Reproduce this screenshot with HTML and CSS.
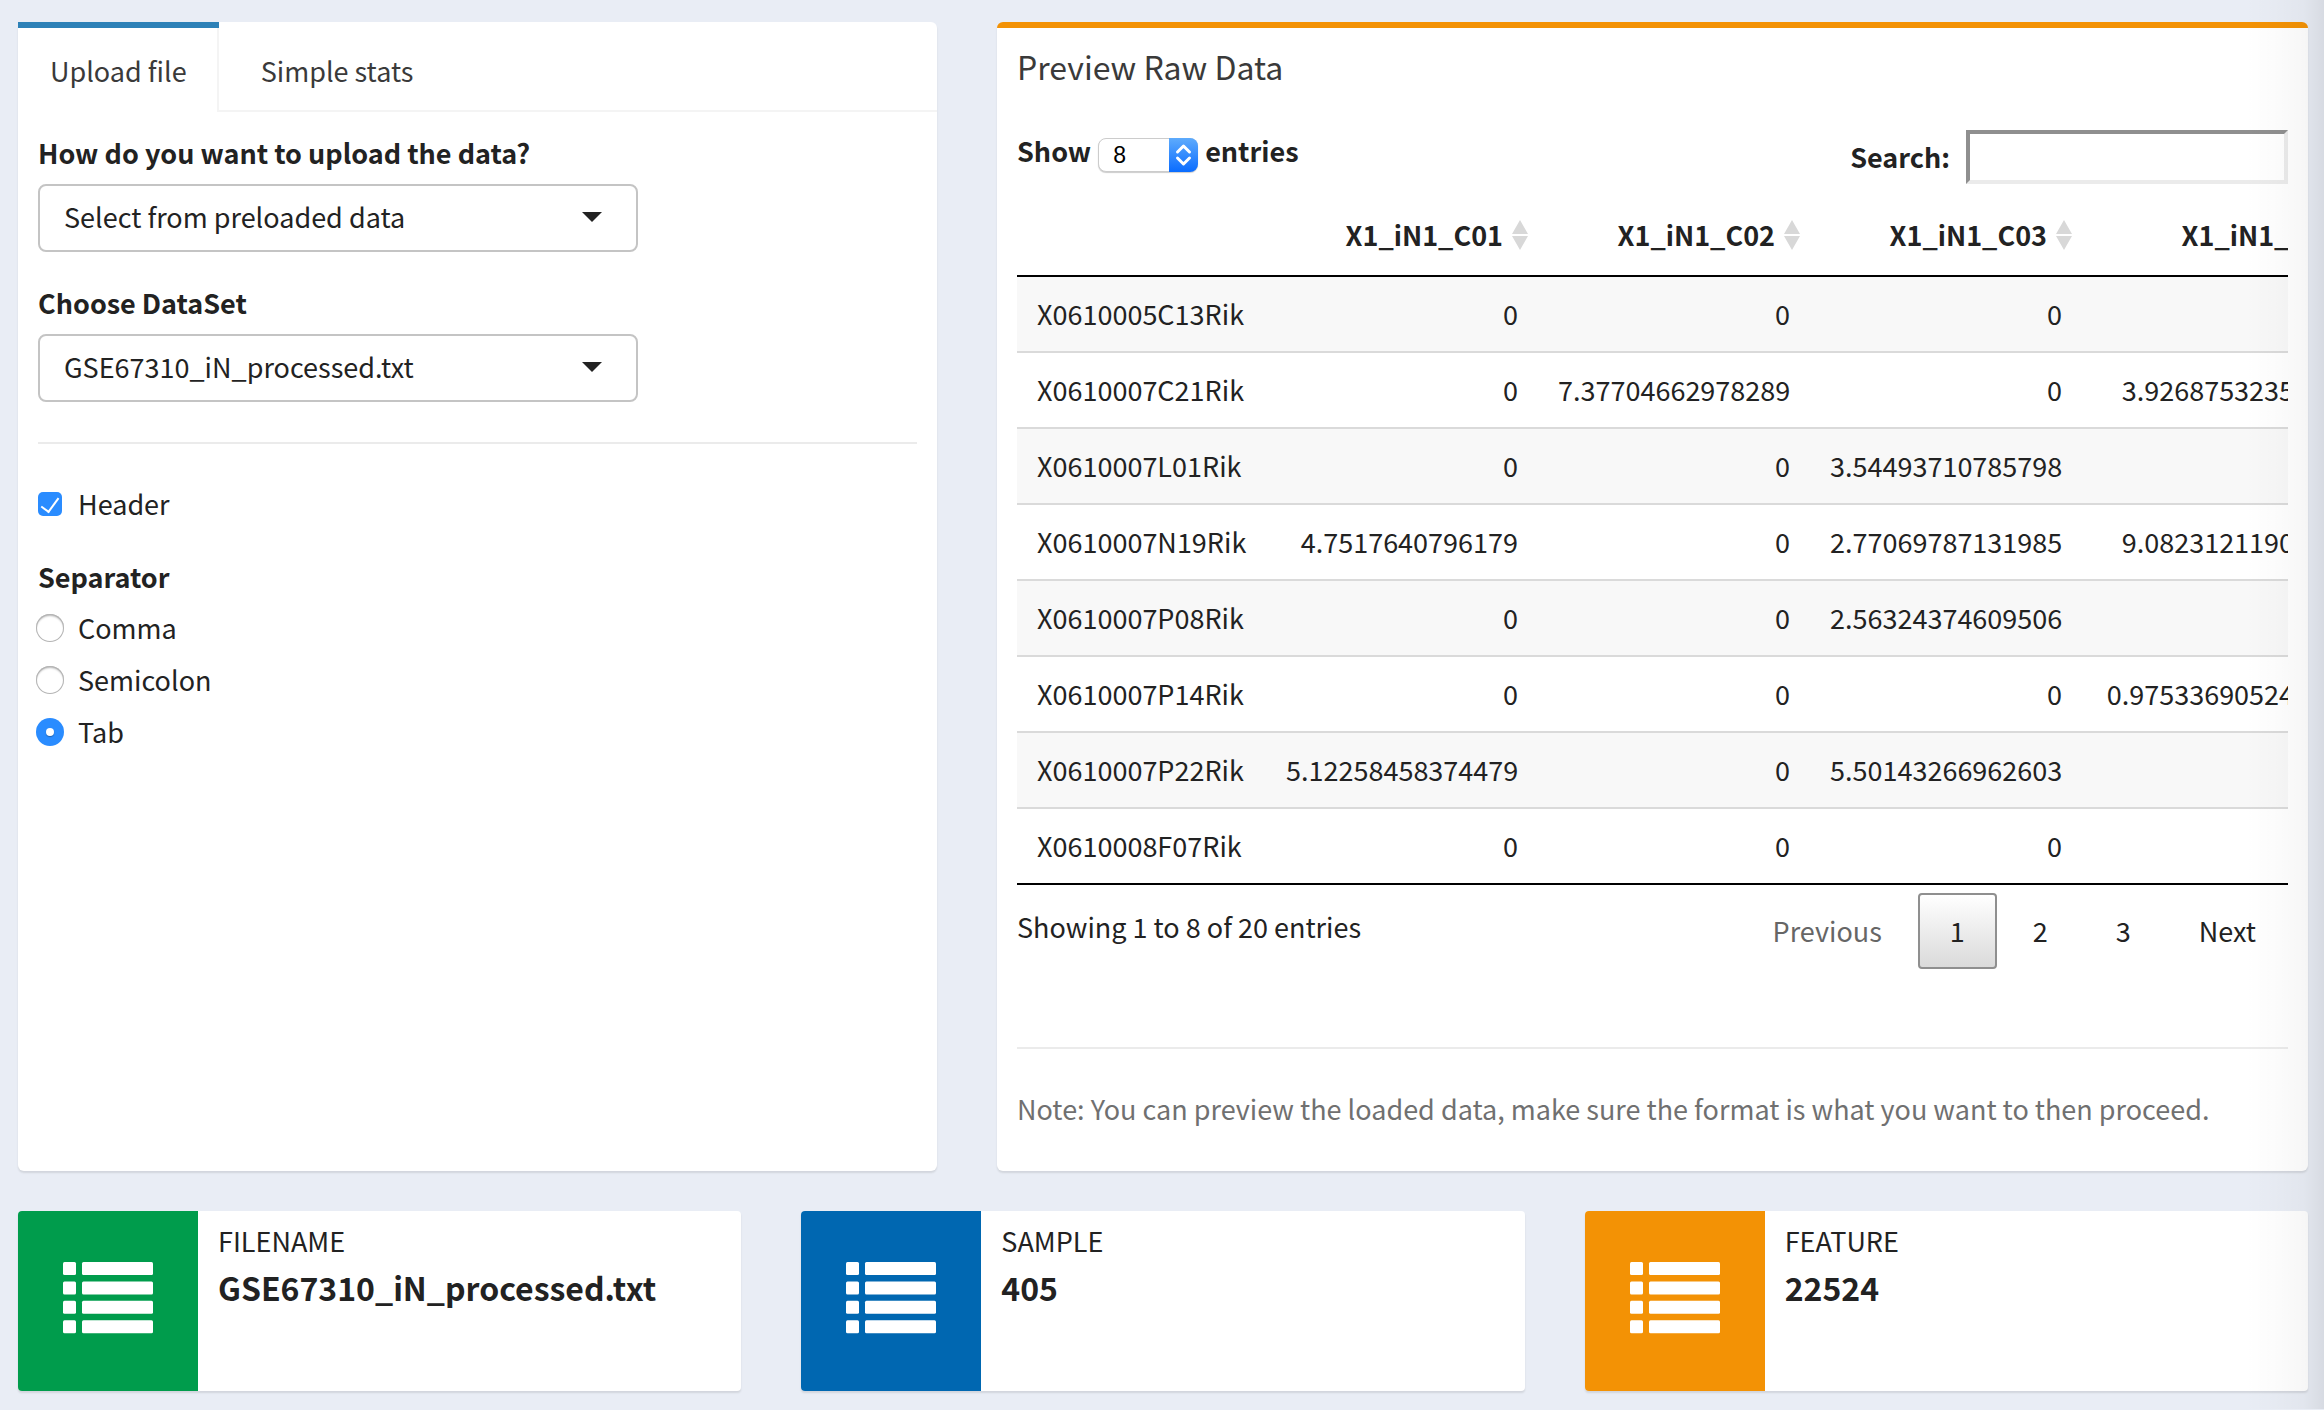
FILE: index.html
```html
<!DOCTYPE html>
<html lang="en">
<head>
<meta charset="utf-8">
<title>Upload data</title>
<link rel="stylesheet" href="styles.css">
</head>
<body>
<svg class="sprite" aria-hidden="true">
  <symbol id="list-icon" viewBox="0 0 90 72">
    <rect x="0" y="0" width="13" height="13" rx="1.5"/><rect x="19" y="0" width="71" height="13" rx="1.5"/>
    <rect x="0" y="19.4" width="13" height="13" rx="1.5"/><rect x="19" y="19.4" width="71" height="13" rx="1.5"/>
    <rect x="0" y="38.8" width="13" height="13" rx="1.5"/><rect x="19" y="38.8" width="71" height="13" rx="1.5"/>
    <rect x="0" y="58.2" width="13" height="13" rx="1.5"/><rect x="19" y="58.2" width="71" height="13" rx="1.5"/>
  </symbol>
  <symbol id="sort-icon" viewBox="0 0 16 30">
    <path d="M8 0 16 14H0zM0 16H16L8 30z"/>
  </symbol>
</svg>
<main class="page">
  <div class="panels">
    <section class="card">
      <nav class="tabs">
        <a class="tab tab-active" href="#upload">Upload file</a>
        <a class="tab" href="#stats">Simple stats</a>
      </nav>
      <form class="upload" id="upload">
        <label class="label" for="source">How do you want to upload the data?</label>
        <div class="picker">
          <select id="source"><option>Select from preloaded data</option></select>
          <svg class="caret" viewBox="0 0 20 10"><path d="M0 0H20L10 10z"/></svg>
        </div>
        <label class="label label-next" for="dataset">Choose DataSet</label>
        <div class="picker">
          <select id="dataset"><option>GSE67310_iN_processed.txt</option></select>
          <svg class="caret" viewBox="0 0 20 10"><path d="M0 0H20L10 10z"/></svg>
        </div>
        <hr class="rule">
        <label class="choice"><input type="checkbox" checked><span>Header</span></label>
        <fieldset class="group">
          <legend>Separator</legend>
          <label class="choice"><input type="radio" name="sep"><span>Comma</span></label>
          <label class="choice"><input type="radio" name="sep"><span>Semicolon</span></label>
          <label class="choice"><input type="radio" name="sep" checked><span>Tab</span></label>
        </fieldset>
      </form>
    </section>

    <section class="card card-warning">
      <h3 class="title">Preview Raw Data</h3>
      <div class="toolbar">
        <div class="length">
          <label for="length">Show</label>
          <div class="stepper">
            <select id="length"><option>8</option></select>
            <svg class="arrows" viewBox="0 0 29 34"><path d="M8.500 14 14.500 8 20.500 14M8.500 20 14.500 26 20.500 20"/></svg>
          </div>
          <span>entries</span>
        </div>
        <div class="search">
          <label for="search">Search:</label>
          <input id="search" type="search">
        </div>
      </div>
      <div class="scroller">
        <table class="data">
          <colgroup><col class="col-name"><col class="col-value"><col class="col-value"><col class="col-value"><col class="col-wide"></colgroup>
          <thead>
            <tr><th></th>
              <th>X1_iN1_C01<svg class="sort"><use href="#sort-icon"/></svg></th>
              <th>X1_iN1_C02<svg class="sort"><use href="#sort-icon"/></svg></th>
              <th>X1_iN1_C03<svg class="sort"><use href="#sort-icon"/></svg></th>
              <th>X1_iN1_C04<svg class="sort"><use href="#sort-icon"/></svg></th></tr>
          </thead>
          <tbody>
            <tr><td>X0610005C13Rik</td><td>0</td><td>0</td><td>0</td><td>0</td></tr>
            <tr><td>X0610007C21Rik</td><td>0</td><td>7.37704662978289</td><td>0</td><td>3.92687532354112</td></tr>
            <tr><td>X0610007L01Rik</td><td>0</td><td>0</td><td>3.54493710785798</td><td>0</td></tr>
            <tr><td>X0610007N19Rik</td><td>4.7517640796179</td><td>0</td><td>2.77069787131985</td><td>9.08231211904112</td></tr>
            <tr><td>X0610007P08Rik</td><td>0</td><td>0</td><td>2.56324374609506</td><td>0</td></tr>
            <tr><td>X0610007P14Rik</td><td>0</td><td>0</td><td>0</td><td>0.975336905241112</td></tr>
            <tr><td>X0610007P22Rik</td><td>5.12258458374479</td><td>0</td><td>5.50143266962603</td><td>0</td></tr>
            <tr><td>X0610008F07Rik</td><td>0</td><td>0</td><td>0</td><td>0</td></tr>
          </tbody>
        </table>
      </div>
      <div class="footer">
        <p class="info">Showing 1 to 8 of 20 entries</p>
        <div class="pager">
          <button type="button" class="page-button" disabled>Previous</button>
          <button type="button" class="page-button page-current">1</button>
          <button type="button" class="page-button">2</button>
          <button type="button" class="page-button">3</button>
          <button type="button" class="page-button">Next</button>
        </div>
      </div>
      <hr class="rule rule-note">
      <p class="note">Note: You can preview the loaded data, make sure the format is what you want to then proceed.</p>
    </section>
  </div>

  <div class="boxes">
    <div class="box"><div class="badge green"><svg><use href="#list-icon"/></svg></div>
      <div class="box-text"><div>FILENAME</div><strong>GSE67310_iN_processed.txt</strong></div></div>
    <div class="box"><div class="badge blue"><svg><use href="#list-icon"/></svg></div>
      <div class="box-text"><div>SAMPLE</div><strong>405</strong></div></div>
    <div class="box"><div class="badge orange"><svg><use href="#list-icon"/></svg></div>
      <div class="box-text"><div>FEATURE</div><strong>22524</strong></div></div>
  </div>
</main>
</body>
</html>
```
FILE: styles.css
```css
* { box-sizing: border-box; }

body {
  position: relative;
  margin: 0;
  background: #e9edf5;
  color: #222;
  font: 27px/40px "Noto Sans CJK SC", "Noto Sans CJK JP", sans-serif;
}

/* shade that falls on the page from its right edge */
body::after {
  content: "";
  position: absolute;
  inset: 0 0 0 auto;
  width: 80px;
  background: linear-gradient(to right, transparent, rgba(0, 0, 0, 0.01) 35%, rgba(0, 0, 0, 0.03) 75%, rgba(0, 0, 0, 0.08));
  pointer-events: none;
}

.sprite { display: none; }

.page {
  display: flex;
  flex-direction: column;
  gap: 40px;
  padding: 22px 16px 18px 18px;
}

.panels {
  display: grid;
  grid-template-columns: minmax(0, 919fr) minmax(0, 1311fr);
  gap: 60px;
}

.card {
  background: #fff;
  border-radius: 6px;
  box-shadow: 0 2px 2px rgba(0, 0, 0, 0.1);
}

.tabs {
  display: flex;
  gap: 10px;
  height: 90px;
  border-bottom: 2px solid #f4f4f4;
}

.tab {
  height: 90px;
  padding: 0 32px;
  border-top: 6px solid transparent;
  color: #3a3a3a;
  line-height: 86px;
  text-decoration: none;
}

.tab-active {
  border-top-color: #2d81b7;
  background: #fff;
  box-shadow: inset -2px 0 #f4f4f4;
}

.upload { padding: 20px; }

.label, .group legend {
  display: block;
  margin-bottom: 10px;
  padding: 0;
  font-weight: 700;
  line-height: 42px;
}

.label-next { margin-top: 30px; }

.picker {
  position: relative;
  width: 600px;
  max-width: 100%;
}

.picker select {
  display: block;
  width: 100%;
  height: 68px;
  padding: 0 60px 2px 24px;
  border: 2px solid #c4c4c4;
  border-radius: 8px;
  background: #fff;
  color: inherit;
  font: inherit;
  appearance: none;
}

.caret {
  position: absolute;
  top: 28px;
  right: 36px;
  width: 20px;
  height: 10px;
  fill: #222;
  pointer-events: none;
}

.rule {
  height: 2px;
  margin: 40px 0;
  border: 0;
  background: #ebebeb;
}

.choice {
  display: flex;
  align-items: center;
}

.choice + .choice { margin-top: 12px; }

.choice input {
  display: grid;
  place-items: center;
  flex: none;
  width: 28px;
  height: 28px;
  margin: 0 14px 0 -2px;
  border-radius: 50%;
  background: #fff;
  box-shadow: inset 0 0 0 1px #b4b4b4, inset 0 2px 2px #bbb;
  appearance: none;
}

.choice input:checked {
  background: #2a8cff;
  box-shadow: none;
}

.choice input[type="radio"]:checked::after {
  content: "";
  width: 8px;
  height: 8px;
  border-radius: 50%;
  background: #fff;
  box-shadow: 0 1px 1px rgba(0, 0, 0, 0.3);
}

.choice input[type="checkbox"] {
  width: 24px;
  height: 24px;
  margin: 0 16px 0 0;
  border-radius: 5px;
}

.choice input[type="checkbox"]:checked::after {
  content: "";
  width: 8px;
  height: 16px;
  margin-bottom: 3px;
  border: solid #fff;
  border-width: 0 2px 2px 0;
  transform: rotate(36deg);
}

.group {
  margin: 32px 0 0;
  padding: 0;
  border: 0;
}

.card-warning {
  padding: 18px 20px 42px;
  border-top: 6px solid #f39205;
}

.title {
  margin: 0 0 44px;
  color: #3a3a3a;
  font-size: 32px;
  font-weight: 400;
}

.toolbar {
  display: flex;
  justify-content: space-between;
  align-items: flex-start;
  font-weight: 700;
}

.length {
  display: flex;
  align-items: flex-end;
  gap: 7px;
  line-height: 42px;
}

.stepper {
  position: relative;
  width: 100px;
  height: 34px;
}

.stepper select {
  display: block;
  width: 100%;
  height: 34px;
  padding: 0 30px 0 14px;
  border: 1px solid #ccc;
  border-radius: 8px;
  background: #fff;
  box-shadow: 0 1px 1px rgba(0, 0, 0, 0.2);
  color: #000;
  font: 23px "Liberation Sans", Arial, sans-serif;
  appearance: none;
}

.arrows {
  position: absolute;
  inset: 0 0 0 auto;
  width: 29px;
  height: 34px;
  border-radius: 0 8px 8px 0;
  background: linear-gradient(#5eabfc, #0a6cff);
  fill: none;
  stroke: #fff;
  stroke-width: 3;
  stroke-linecap: round;
  stroke-linejoin: round;
  pointer-events: none;
}

.search {
  display: flex;
  align-items: center;
  gap: 16px;
}

.search input {
  width: 322px;
  height: 54px;
  padding: 0 12px;
  border: 4px solid;
  border-color: #8f8f8f #ebebeb #ebebeb #8f8f8f;
  background: #fff;
  font: inherit;
  outline: 0;
  appearance: none;
}

.scroller {
  margin-top: 8px;
  overflow: hidden;
}

.data {
  width: 1357px;
  border-spacing: 0;
  table-layout: fixed;
}

.col-name { width: 249px; }
.col-value { width: 272px; }
.col-wide { width: 292px; }

.data th, .data td {
  height: 76px;
  padding: 0 20px;
  border-bottom: 2px solid #dadada;
  text-align: right;
  white-space: nowrap;
}

.data th {
  height: 85px;
  padding: 2px 10px 0 20px;
  border-color: #000;
}

.data td:first-child { text-align: left; }
.data tr:last-child td { border-color: #000; }
.data tbody tr:nth-child(odd) { background: #f8f8f8; }

.sort {
  width: 16px;
  height: 30px;
  margin-left: 9px;
  fill: #d8d8d8;
  vertical-align: -4px;
}

.footer {
  display: flex;
  justify-content: space-between;
  align-items: flex-start;
  margin-top: 8px;
}

.info { margin: 14px 0 0; }

.pager {
  display: flex;
  gap: 4px;
}

.page-button {
  height: 76px;
  padding: 0 30px;
  border: 2px solid transparent;
  border-radius: 4px;
  background: none;
  color: #222;
  font: inherit;
}

.page-button:disabled { color: #666; }

.page-current {
  border-color: #8f8f8f;
  background: linear-gradient(#fff, #dadada);
}

.rule-note { margin-top: 78px; }

.note {
  margin: 0;
  color: #707070;
}

.boxes {
  display: grid;
  grid-template-columns: repeat(3, minmax(0, 1fr));
  gap: 60px;
}

.box {
  display: flex;
  min-height: 180px;
  overflow: hidden;
  border-radius: 4px;
  background: #fff;
  box-shadow: 0 2px 2px rgba(0, 0, 0, 0.1);
}

.badge {
  display: grid;
  place-items: center;
  flex: none;
  width: 180px;
  padding-bottom: 6px;
}

.badge svg {
  width: 90px;
  height: 72px;
  fill: #fff;
}

.green { background: #009c4c; }
.blue { background: #0067b1; }
.orange { background: #f39205; }

.box-text { padding: 10px 20px; }

.box-text strong {
  display: block;
  font-size: 32px;
  line-height: 52px;
}
```
